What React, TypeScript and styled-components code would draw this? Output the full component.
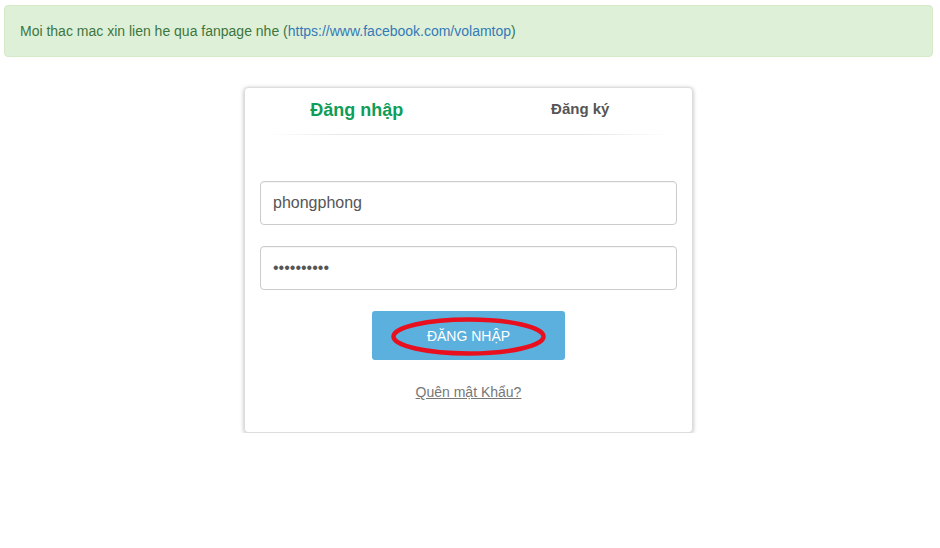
import styled, { createGlobalStyle } from 'styled-components';

const GlobalStyle = createGlobalStyle`
  html, body {
    margin: 0;
    padding: 0;
    background: #fff;
    font-family: "Liberation Sans", Arial, sans-serif;
    font-size: 14px;
    color: #333;
  }
`;

const Alert = styled.div`
  margin: 5px 7px 0 4px;
  padding: 15px;
  line-height: 20px;
  background: #dff0d8;
  border: 1px solid #d6e9c6;
  border-radius: 4px;
  color: #3c763d;

  a {
    color: #337ab7;
    text-decoration: none;
  }
`;

const Page = styled.main`
  display: flex;
  justify-content: center;
  padding: 30px 3px 0 0;
`;

const Card = styled.div`
  width: 447px;
  background: #fff;
  border: 1px solid #ddd;
  border-radius: 4px;
  box-shadow: 0 1px 4px rgba(0, 0, 0, 0.28);
  padding-bottom: 30px;
`;

const Tabs = styled.div`
  display: grid;
  grid-template-columns: 1fr 1fr;
  height: 44px;
  align-items: center;
  margin-bottom: 2px;
`;

const Tab = styled.div<{ $active?: boolean }>`
  text-align: center;
  font-weight: bold;
  font-size: ${({ $active }) => ($active ? '18px' : '15px')};
  color: ${({ $active }) => ($active ? '#0f9d58' : '#555')};
  padding-bottom: ${({ $active }) => ($active ? '0' : '3px')};
  cursor: pointer;
`;

const Divider = styled.div`
  height: 1px;
  margin: 0 24px;
  background: linear-gradient(to right, rgba(230, 230, 230, 0), #e6e6e6 20%, #e6e6e6 80%, rgba(230, 230, 230, 0));
`;

const Form = styled.form`
  display: flex;
  flex-direction: column;
  align-items: center;
  gap: 21px;
  padding: 46px 15px 0 15px;
`;

const Input = styled.input`
  box-sizing: border-box;
  width: 100%;
  height: 44px;
  padding: 0 12px;
  border: 1px solid #ccc;
  border-radius: 4px;
  font-family: "Liberation Sans", Arial, sans-serif;
  font-size: 16px;
  color: #555;
  outline: none;
  box-shadow: inset 0 1px 1px rgba(0, 0, 0, 0.04);
`;

const SubmitButton = styled.button`
  position: relative;
  width: 193px;
  height: 49px;
  border: none;
  border-radius: 3px;
  background: #5bb0de;
  color: #fff;
  font-family: "Liberation Sans", Arial, sans-serif;
  font-size: 14px;
  cursor: pointer;
`;

const Mark = styled.svg`
  position: absolute;
  left: 18px;
  top: 5px;
  pointer-events: none;
`;

const Forgot = styled.a`
  margin-top: 1px;
  color: #777;
  font-size: 14px;
  text-decoration: underline;
  line-height: 20px;
`;

export default function App() {
  return (
    <>
      <GlobalStyle />
      <Alert>
        Moi thac mac xin lien he qua fanpage nhe (
        <a href="#">https://www.facebook.com/volamtop</a>)
      </Alert>

      <Page>
        <Card>
          <Tabs>
            <Tab $active>Đăng nhập</Tab>
            <Tab>Đăng ký</Tab>
          </Tabs>
          <Divider />

          <Form onSubmit={(e) => e.preventDefault()}>
            <Input type="text" defaultValue="phongphong" readOnly />
            <Input type="password" defaultValue="1234567890" readOnly />
            <SubmitButton type="submit">
              ĐĂNG NHẬP
              <Mark width="157" height="41" viewBox="0 0 157 41">
                <ellipse cx="78.5" cy="20.5" rx="75" ry="17" fill="none" stroke="#e8101e" strokeWidth="4.5" />
              </Mark>
            </SubmitButton>
            <Forgot href="#">Quên mật Khẩu?</Forgot>
          </Form>
        </Card>
      </Page>
    </>
  );
}
